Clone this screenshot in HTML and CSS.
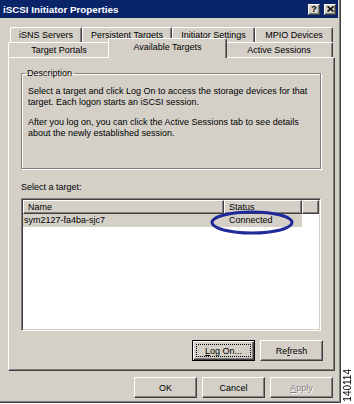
FILE: index.html
```html
<!DOCTYPE html>
<html lang="en">
<head>
    <meta charset="UTF-8">
    <meta name="viewport" content="width=device-width, initial-scale=1.0">
    <title>iSCSI Initiator Properties</title>
    <link rel="stylesheet" href="styles.css">
</head>
<body>
    <div class="screen">
        <div class="dialog">
            <div class="titlebar">
                <span class="title">iSCSI Initiator Properties</span>
                <div class="caption-btns">
                    <span class="cap-btn">?</span>
                    <span class="cap-btn">
                        <svg width="7" height="6" viewBox="0 0 7 6"><path d="M0.5 0.5 L6.5 5.5 M6.5 0.5 L0.5 5.5" stroke="#000" stroke-width="1.6"/></svg>
                    </span>
                </div>
            </div>

            <div class="tabs">
                <div class="tab-row back">
                    <div class="tab tab-isns">iSNS Servers</div>
                    <div class="tab tab-persist">Persistent Targets</div>
                    <div class="tab tab-settings">Initiator Settings</div>
                    <div class="tab tab-mpio">MPIO Devices</div>
                </div>
                <div class="tab-row front">
                    <div class="tab tab-portals">Target Portals</div>
                    <div class="tab tab-avail selected">Available Targets</div>
                    <div class="tab tab-sessions">Active Sessions</div>
                </div>

                <div class="tab-panel">
                    <fieldset class="group">
                        <legend>Description</legend>
                        <p>Select a target and click Log On to access the storage devices for that target. Each logon starts an iSCSI session.</p>
                        <p>After you log on, you can click the Active Sessions tab to see details about the newly established session.</p>
                    </fieldset>

                    <div class="list-label">Select a target:</div>
                    <div class="list">
                        <div class="list-head">
                            <span class="head-cell col-name">Name</span>
                            <span class="head-cell col-status">Status</span>
                            <span class="head-cell col-fill"></span>
                        </div>
                        <div class="list-row selected">
                            <span class="cell col-name">sym2127-fa4ba-sjc7</span>
                            <span class="cell col-status">Connected</span>
                        </div>
                        <svg class="callout" width="84" height="25" viewBox="0 0 84 25">
                            <ellipse cx="42" cy="12.5" rx="40" ry="10.5" fill="none" stroke="#1f2a98" stroke-width="3"/>
                        </svg>
                    </div>

                    <div class="panel-buttons">
                        <button class="btn default"><span class="focus-rect"><u>L</u>og On...</span></button>
                        <button class="btn">Re<u>f</u>resh</button>
                    </div>
                </div>
            </div>

            <div class="dialog-buttons">
                <button class="btn">OK</button>
                <button class="btn">Cancel</button>
                <button class="btn disabled"><u>A</u>pply</button>
            </div>
        </div>

        <div class="side">
            <span class="fig-num">140114</span>
        </div>
    </div>
</body>
</html>
```

FILE: styles.css
```css
:root {
    --face: #d4d0c8;
    --light: #ffffff;
    --shadow: #808080;
    --dark: #404040;
    --title: #0a246a;
}

* {
    margin: 0;
    padding: 0;
    box-sizing: border-box;
}

body {
    background: #fff;
    font-family: "Liberation Sans", Tahoma, Arial, sans-serif;
    font-size: 9px;
    color: #000;
}

.screen {
    display: flex;
    width: 354px;
    height: 404px;
}

/* window frame */
.dialog {
    width: 341px;
    height: 403px;
    background: var(--face);
    border-right: 1px solid var(--dark);
    border-bottom: 1px solid var(--dark);
    box-shadow: inset -1px -1px var(--shadow);
    padding-right: 2px;
    display: flex;
    flex-direction: column;
}

.titlebar {
    height: 18px;
    background: var(--title);
    color: #fff;
    display: flex;
    align-items: center;
    justify-content: space-between;
    padding: 0 2px 0 3px;
}

.title {
    font-weight: bold;
    font-size: 9.8px;
}

.caption-btns {
    display: flex;
    gap: 4px;
}

.cap-btn {
    width: 12px;
    height: 11px;
    background: var(--face);
    border: 1px solid;
    border-color: var(--light) var(--dark) var(--dark) var(--light);
    box-shadow: inset -1px -1px var(--shadow);
    display: flex;
    align-items: center;
    justify-content: center;
    color: #000;
    font-weight: bold;
    font-size: 9px;
    line-height: 9px;
}

/* tabs */
.tabs {
    margin: 9px 0 0 8px;
    width: 327px;
}

.tab-row {
    display: flex;
    align-items: flex-end;
    height: 15px;
}

.tab-row.back {
    padding-left: 2px;
}

.tab {
    flex: none;
    height: 15px;
    line-height: 14px;
    text-align: center;
    white-space: nowrap;
    background: var(--face);
    border-top: 1px solid var(--light);
    border-left: 1px solid var(--light);
    border-right: 1px solid var(--dark);
    box-shadow: inset -1px 0 var(--shadow);
    border-radius: 2px 2px 0 0;
}

.tab-isns { width: 72px; }
.tab-persist { width: 90px; }
.tab-settings { width: 83px; }
.tab-mpio { width: 78px; }
.tab-portals { width: 102px; }
.tab-avail { width: 119px; }
.tab-sessions { width: 108px; }

.tab.selected {
    position: relative;
    z-index: 2;
    height: 20px;
    margin: 0 -2px -1px;
    padding-top: 1px;
}

.tab-panel {
    height: 314px;
    border-top: 1px solid var(--light);
    border-left: 1px solid var(--light);
    border-right: 1px solid var(--dark);
    border-bottom: 1px solid var(--dark);
    box-shadow: inset -1px -1px var(--shadow);
    padding: 10px 13px 0 12px;
    display: flex;
    flex-direction: column;
}

/* description group box */
.group {
    height: 101px;
    border: 1px solid var(--shadow);
    box-shadow: inset 1px 1px var(--light), 1px 1px var(--light);
    padding: 7px 6px 0;
}

.group legend {
    margin-left: -3px;
    padding: 0 2px;
    line-height: 11px;
}

.group p {
    line-height: 11px;
}

.group p + p {
    margin-top: 9px;
}

.list-label {
    margin-top: 13px;
    line-height: 11px;
}

/* target list */
.list {
    position: relative;
    margin-top: 5px;
    height: 133px;
    background: #fff;
    border: 1px solid;
    border-color: var(--shadow) var(--light) var(--light) var(--shadow);
    box-shadow: inset 1px 1px var(--dark), inset -1px -1px var(--face);
    padding: 1px;
}

.list-head {
    display: flex;
    height: 14px;
}

.head-cell {
    background: var(--face);
    border: 1px solid;
    border-color: var(--light) var(--dark) var(--dark) var(--light);
    box-shadow: inset -1px -1px var(--shadow);
    padding-left: 4px;
    line-height: 12px;
}

.col-name { width: 201px; }
.col-status { width: 78px; }
.col-fill { flex: 1; }

.list-row {
    display: flex;
    height: 13px;
    line-height: 13px;
}

.list-row.selected .cell {
    background: var(--face);
}

.list-row .col-name {
    padding-left: 1px;
}

.list-row .col-status {
    padding-left: 5px;
}

.callout {
    position: absolute;
    left: 188px;
    top: 11px;
}

/* buttons */
.btn {
    width: 63px;
    height: 21px;
    background: var(--face);
    border: 1px solid;
    border-color: var(--light) var(--dark) var(--dark) var(--light);
    box-shadow: inset -1px -1px var(--shadow);
    font-family: inherit;
    font-size: 9px;
    color: #000;
    display: flex;
    align-items: center;
    justify-content: center;
}

.btn.default {
    border-color: #000;
    box-shadow: inset 1px 1px var(--light), inset -1px -1px var(--dark), inset -2px -2px var(--shadow);
    padding: 3px;
}

.focus-rect {
    flex: 1;
    align-self: stretch;
    border: 1px dotted #000;
    display: flex;
    align-items: center;
    justify-content: center;
}

.btn.disabled {
    color: var(--shadow);
    text-shadow: 1px 1px var(--light);
}

.panel-buttons {
    margin: 9px -2px 0 0;
    display: flex;
    justify-content: flex-end;
    gap: 5px;
}

.dialog-buttons {
    margin-top: 6px;
    padding-right: 5px;
    display: flex;
    justify-content: flex-end;
    gap: 5px;
}

/* figure number in the margin */
.side {
    width: 13px;
    display: flex;
    flex-direction: column;
    justify-content: flex-end;
    padding: 0 0 2px 2px;
}

.fig-num {
    writing-mode: vertical-rl;
    transform: rotate(180deg);
    font-size: 10px;
    line-height: 10px;
}
```
